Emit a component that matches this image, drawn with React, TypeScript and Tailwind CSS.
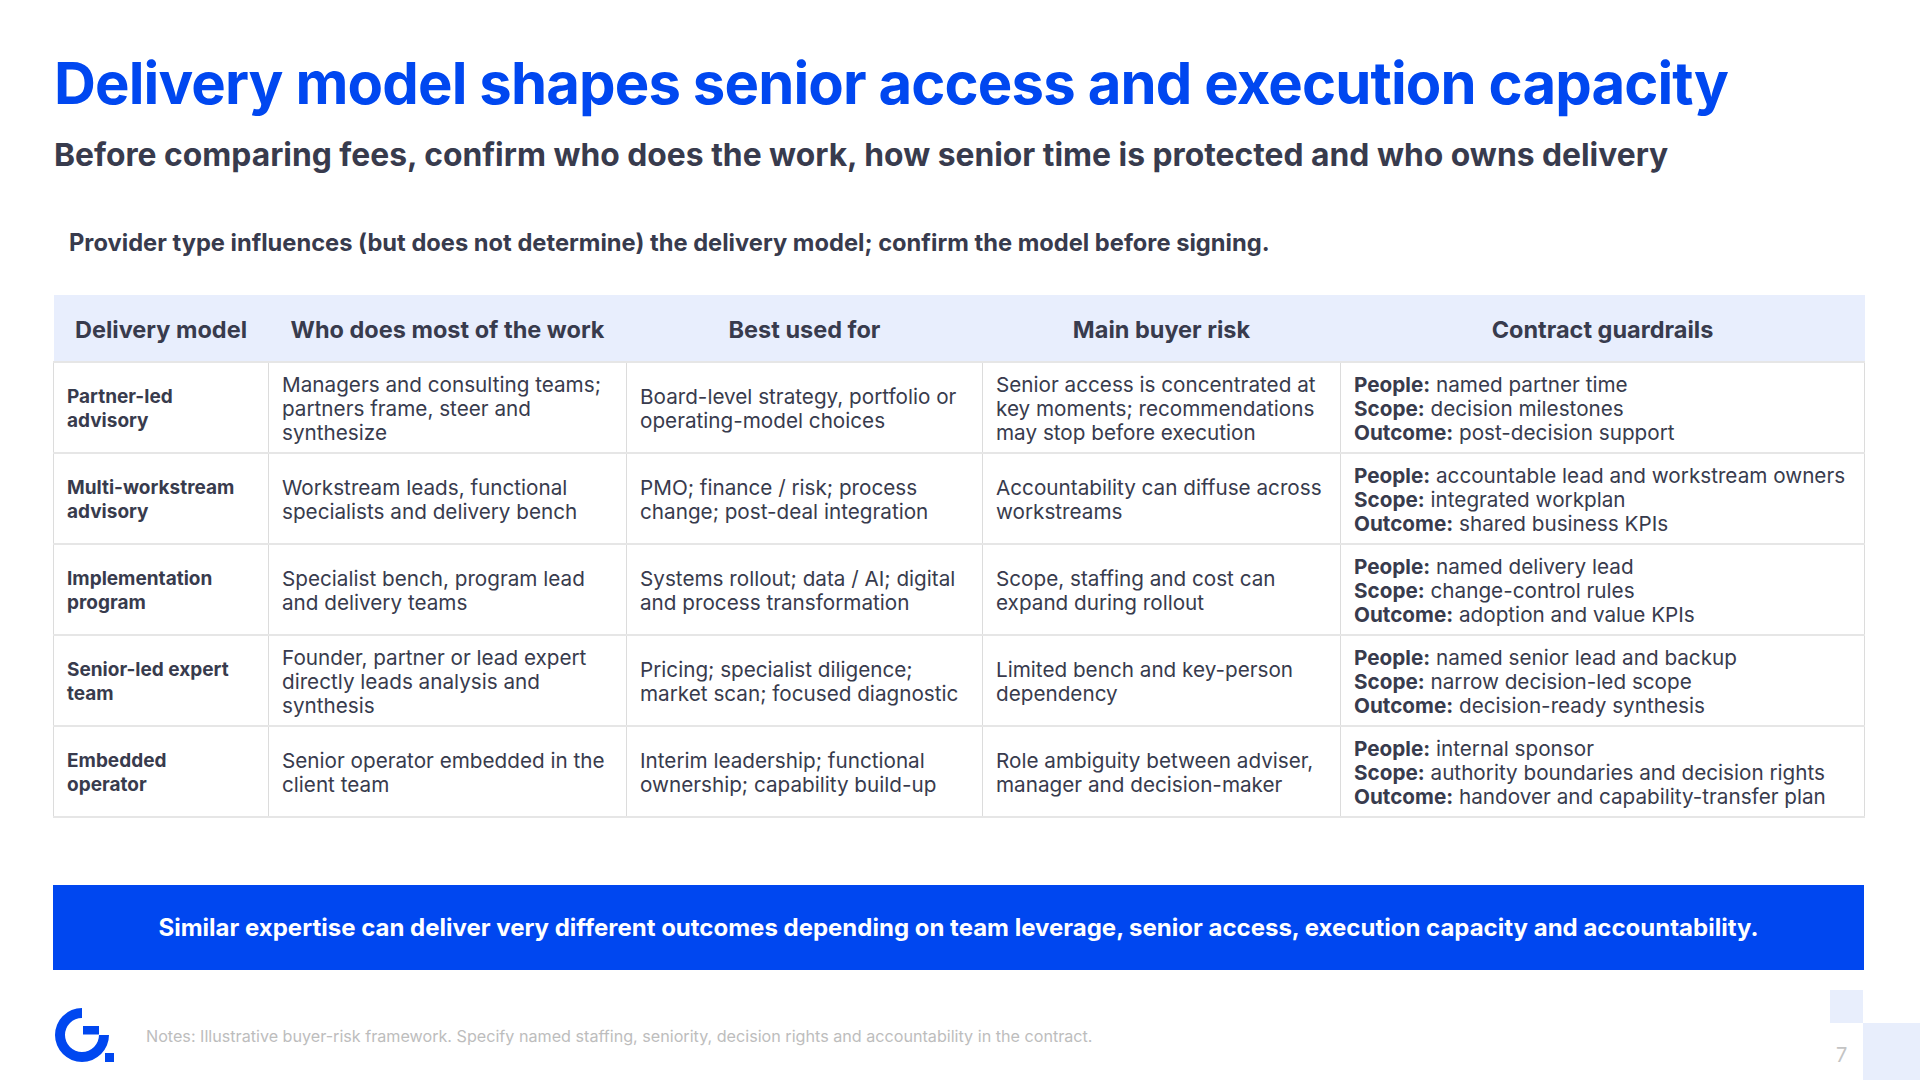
import React from 'react';

type Row = {
  model: string[];
  who: string[];
  best: string[];
  risk: string[];
  guard: [string, string, string];
};

const rows: Row[] = [
  {
    model: ['Partner-led', 'advisory'],
    who: ['Managers and consulting teams;', 'partners frame, steer and', 'synthesize'],
    best: ['Board-level strategy, portfolio or', 'operating-model choices'],
    risk: ['Senior access is concentrated at', 'key moments; recommendations', 'may stop before execution'],
    guard: ['named partner time', 'decision milestones', 'post-decision support'],
  },
  {
    model: ['Multi-workstream', 'advisory'],
    who: ['Workstream leads, functional', 'specialists and delivery bench'],
    best: ['PMO; finance / risk; process', 'change; post-deal integration'],
    risk: ['Accountability can diffuse across', 'workstreams'],
    guard: ['accountable lead and workstream owners', 'integrated workplan', 'shared business KPIs'],
  },
  {
    model: ['Implementation', 'program'],
    who: ['Specialist bench, program lead', 'and delivery teams'],
    best: ['Systems rollout; data / AI; digital', 'and process transformation'],
    risk: ['Scope, staffing and cost can', 'expand during rollout'],
    guard: ['named delivery lead', 'change-control rules', 'adoption and value KPIs'],
  },
  {
    model: ['Senior-led expert', 'team'],
    who: ['Founder, partner or lead expert', 'directly leads analysis and', 'synthesis'],
    best: ['Pricing; specialist diligence;', 'market scan; focused diagnostic'],
    risk: ['Limited bench and key-person', 'dependency'],
    guard: ['named senior lead and backup', 'narrow decision-led scope', 'decision-ready synthesis'],
  },
  {
    model: ['Embedded', 'operator'],
    who: ['Senior operator embedded in the', 'client team'],
    best: ['Interim leadership; functional', 'ownership; capability build-up'],
    risk: ['Role ambiguity between adviser,', 'manager and decision-maker'],
    guard: ['internal sponsor', 'authority boundaries and decision rights', 'handover and capability-transfer plan'],
  },
];

const headers = ['Delivery model', 'Who does most of the work', 'Best used for', 'Main buyer risk', 'Contract guardrails'];

function Lines({ lines }: { lines: string[] }) {
  return (
    <>
      {lines.map((l, i) => (
        <span key={i} className="block whitespace-nowrap">
          {l}
        </span>
      ))}
    </>
  );
}

function Logo() {
  return (
    <svg width="60" height="56" viewBox="0 0 60 56" className="shrink-0">
      <path d="M27 1 A27 27 0 1 0 54 28 L44 28 A17 17 0 1 1 27 11 Z" fill="#0047f0" />
      <rect x="28" y="19" width="16" height="8.5" fill="#0047f0" />
      <rect x="50" y="46" width="9" height="9" fill="#0047f0" />
    </svg>
  );
}

const cell = 'border-x border-y-2 border-x-[#dcdcdc] border-y-[#e6e6e6] px-[13px] pt-[3px] align-middle';

export default function App() {
  const labels = ['People:', 'Scope:', 'Outcome:'];
  return (
    <div className="relative w-[1920px] h-[1080px] overflow-hidden bg-white font-['Inter',sans-serif] text-[#383b4d]">
      <div className="px-[53px] pt-[51px]">
        {/* Title block */}
        <h1 className="text-[58px] leading-[64px] font-bold tracking-[-0.015em] text-[#0047f0] pl-[1px]">
          Delivery model shapes senior access and execution capacity
        </h1>
        <p className="mt-[21px] text-[31.8px] leading-[38px] font-bold pl-[1px]">
          Before comparing fees, confirm who does the work, how senior time is protected and who owns delivery
        </p>
        <p className="mt-[55px] pl-[16px] text-[23.7px] leading-[28px] font-bold">
          Provider type influences (but does not determine) the delivery model; confirm the model before signing.
        </p>

        {/* Comparison table */}
        <table className="mt-[38px] w-[1811px] table-fixed border-collapse">
          <colgroup>
            <col className="w-[215px]" />
            <col className="w-[358px]" />
            <col className="w-[356px]" />
            <col className="w-[358px]" />
            <col className="w-[524px]" />
          </colgroup>
          <thead>
            <tr className="h-[67px] bg-[#e8eefd]">
              {headers.map((h) => (
                <th
                  key={h}
                  className="border-b border-b-[#d6d9e0] px-[8px] pt-[4px] text-center align-middle text-[23.5px] leading-[28px] font-bold whitespace-nowrap"
                >
                  {h}
                </th>
              ))}
            </tr>
          </thead>
          <tbody>
            {rows.map((r) => (
              <tr key={r.model.join(' ')} className="h-[91px] text-[20.7px] leading-[24px]">
                <td className={`${cell} font-bold text-[19px]`}>
                  <Lines lines={r.model} />
                </td>
                <td className={cell}>
                  <Lines lines={r.who} />
                </td>
                <td className={cell}>
                  <Lines lines={r.best} />
                </td>
                <td className={cell}>
                  <Lines lines={r.risk} />
                </td>
                <td className={cell}>
                  {r.guard.map((g, i) => (
                    <span key={i} className="block whitespace-nowrap">
                      <span className="font-bold">{labels[i]}</span> {g}
                    </span>
                  ))}
                </td>
              </tr>
            ))}
          </tbody>
        </table>

        {/* Callout */}
        <div className="mt-[67px] w-[1811px] h-[85px] bg-[#0047f0] flex items-center justify-center">
          <p className="text-white text-[24px] font-bold">
            Similar expertise can deliver very different outcomes depending on team leverage, senior access, execution capacity and accountability.
          </p>
        </div>
      </div>

      {/* Footer */}
      <div className="absolute left-[55px] top-[1007px] flex items-center gap-[31px]">
        <Logo />
        <p className="text-[16.15px] text-[#bdbdbd] pt-[2px]">
          Notes: Illustrative buyer-risk framework. Specify named staffing, seniority, decision rights and accountability in the contract.
        </p>
      </div>
      <div className="absolute left-[1830px] top-[990px] w-[33px] h-[33px] bg-[#e8eefc]" />
      <div className="absolute left-[1863px] top-[1023px] w-[57px] h-[57px] bg-[#e8eefc]" />
      <span className="absolute left-[1836px] top-[1040px] text-[20px] text-[#c4c4c4]">7</span>
    </div>
  );
}
